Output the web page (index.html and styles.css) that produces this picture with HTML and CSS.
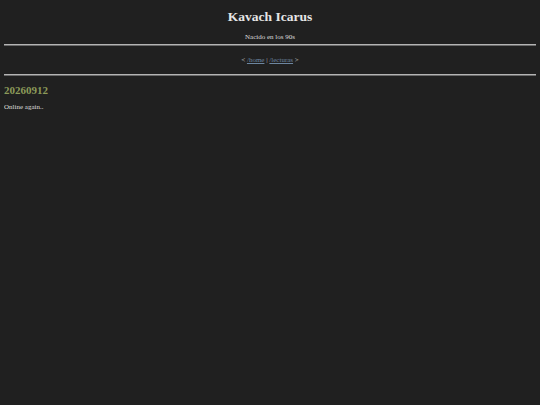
FILE: index.html
```html
<!DOCTYPE html>
<html>
<head>
  <title>Kavach Icarus</title>
  <link rel="stylesheet" href="styles.css">
</head>
<body>
  <header class="site-header">
    <h1>Kavach Icarus</h1>
    <p class="tagline">Nacido en los 90s</p>
  </header>
  <hr>
  <nav class="nav">
    &lt; <a href="#">/home</a> | <a href="#">/lecturas</a> &gt;
  </nav>
  <hr>
  <main>
    <h2 class="post-title">20260912</h2>
    <p class="post-body">Online again..</p>
  </main>
</body>
</html>
```

FILE: styles.css
```css
body {
  margin: 0 4px;
  background-color: #202020;
  color: #dedede;
  font-family: "Liberation Serif", "Times New Roman", serif;
  font-size: 7px;
  line-height: 8px;
}

.site-header {
  text-align: center;
}

h1 {
  margin: 0;
  padding-top: 9px;
  font-size: 13.5px;
  line-height: 15px;
  font-weight: bold;
  color: #e6e6e6;
}

.tagline {
  margin: 9px 0 0 0;
}

hr {
  height: 0;
  border: none;
  border-top: 1px solid #b4b4b4;
  border-bottom: 1px solid #6a6a6a;
  margin: 3px -1px 0 -1px;
}

.nav {
  text-align: center;
  margin: 10px 0;
  color: #bdbdbd;
}

.nav a {
  color: #6d86a0;
}

.post-title {
  margin: 8px 0 0 0;
  font-size: 11px;
  line-height: 13px;
  font-weight: bold;
  color: #8c9a5a;
}

.post-body {
  margin: 6px 0 0 0;
}
```
